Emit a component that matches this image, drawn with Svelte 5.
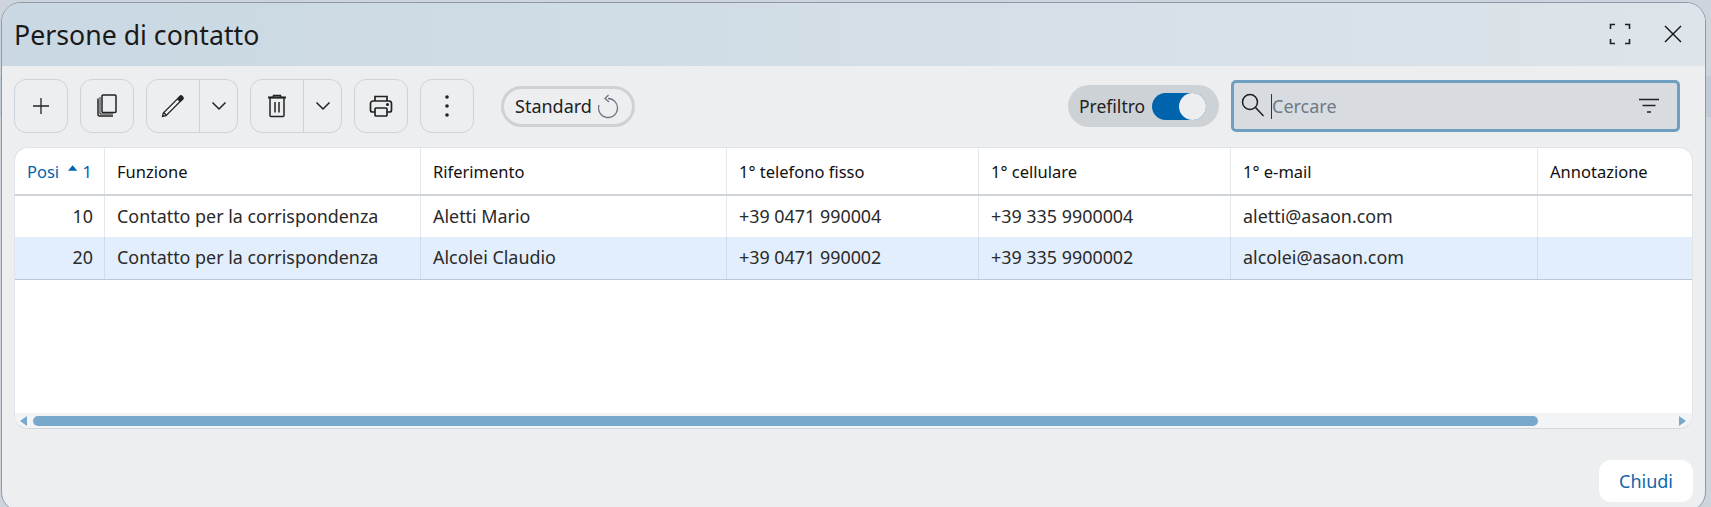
<script>
  const columns = ['Funzione', 'Riferimento', '1° telefono fisso', '1° cellulare', '1° e-mail', 'Annotazione'];

  const rows = [
    { pos: 10, cells: ['Contatto per la corrispondenza', 'Aletti Mario', '+39 0471 990004', '+39 335 9900004', 'aletti@asaon.com', ''] },
    { pos: 20, cells: ['Contatto per la corrispondenza', 'Alcolei Claudio', '+39 0471 990002', '+39 335 9900002', 'alcolei@asaon.com', ''], selected: true }
  ];
</script>

<div class="backdrop">
  <div class="modal">
    <header class="head">
      <h1>Persone di contatto</h1>
      <div class="head-actions">
        <svg width="22" height="22" viewBox="0 0 22 22" fill="none" stroke="#222" stroke-width="1.6">
          <path d="M1.5 6V1.5H6M16 1.5h4.500V6M20.500 16v4.500H16M6 20.500H1.500V16" />
        </svg>
        <svg width="18" height="18" viewBox="0 0 18 18" fill="none" stroke="#111" stroke-width="1.4">
          <path d="M1 1l16 16M17 1L1 17" />
        </svg>
      </div>
    </header>

    <div class="toolbar">
      <button class="tool">
        <svg width="18" height="18" viewBox="0 0 18 18" fill="none" stroke="#222" stroke-width="1.3"><path d="M9 1v16M1 9h16" /></svg>
      </button>
      <button class="tool">
        <svg width="20" height="23" viewBox="0 0 20 23" fill="none" stroke="#222" stroke-width="1.5">
          <rect x="5" y="1" width="14" height="17.500" rx="1" />
          <path d="M1 4.500v16q0 1.500 1.500 1.500H16" />
          <path d="M3 3v17h13" stroke-width="1" />
        </svg>
      </button>
      <div class="split">
        <button class="tool part">
          <svg width="24" height="24" viewBox="0 0 24 24" fill="none" stroke="#222" stroke-width="1.3">
            <path d="M1.500 22.500l.8-3.500L16.500 4.800l2.700 2.700L5 21.700z" />
            <path d="M3 18.800l2.200 2.200" />
            <path d="M17 4.300l2-2q1-1 2 0l.8.800q1 1 0 2l-2 2z" fill="#222" />
          </svg>
        </button>
        <button class="tool caret">
          <svg width="16" height="10" viewBox="0 0 16 10" fill="none" stroke="#222" stroke-width="1.5"><path d="M1.500 1.500L8 8l6.500-6.500" /></svg>
        </button>
      </div>
      <div class="split">
        <button class="tool part">
          <svg width="20" height="24" viewBox="0 0 20 24" fill="none" stroke="#222" stroke-width="1.5">
            <path d="M1 3.500h18" stroke-width="2" />
            <path d="M6.500 3V1.500h7V3" />
            <rect x="3" y="3.500" width="14" height="19" rx="1" />
            <path d="M8 8v10.500M12 8v10.500" />
          </svg>
        </button>
        <button class="tool caret">
          <svg width="16" height="10" viewBox="0 0 16 10" fill="none" stroke="#222" stroke-width="1.5"><path d="M1.500 1.500L8 8l6.500-6.500" /></svg>
        </button>
      </div>
      <button class="tool">
        <svg width="24" height="24" viewBox="0 0 24 24" fill="none" stroke="#222" stroke-width="1.7">
          <path d="M6 7V2.500h12V7" />
          <path d="M6 18H3.500A2 2 0 0 1 1.500 16v-6.500a2.500 2.500 0 0 1 2.500-2.500h16a2.500 2.500 0 0 1 2.500 2.500V16a2 2 0 0 1-2 2H18" />
          <rect x="6" y="14" width="12" height="8" rx="1" />
          <circle cx="18.500" cy="10.500" r="0.700" fill="#222" />
        </svg>
      </button>
      <button class="tool">
        <svg width="6" height="24" viewBox="0 0 6 24" fill="#222">
          <circle cx="3" cy="3" r="1.800" /><circle cx="3" cy="12" r="1.800" /><circle cx="3" cy="21" r="1.800" />
        </svg>
      </button>

      <div class="standard">
        <span>Standard</span>
        <svg width="22" height="25" viewBox="0 0 22 25" fill="none" stroke="#6b7684" stroke-width="1.3">
          <path d="M10 4.500a9.500 9.500 0 1 1-9 6.500" />
          <path d="M10.500 1L7 4.500 11 8" />
        </svg>
      </div>

      <div class="prefilter">
        <span>Prefiltro</span>
        <div class="toggle"><div class="knob"></div></div>
      </div>

      <div class="search">
        <svg width="24" height="24" viewBox="0 0 24 24" fill="none" stroke="#1c1c1c" stroke-width="1.500">
          <circle cx="9" cy="9" r="7.500" />
          <path d="M14.500 14.500l8 8.500" />
        </svg>
        <div class="input"><i class="cursor"></i>Cercare</div>
        <svg class="filter" width="22" height="16" viewBox="0 0 22 16" fill="none" stroke="#222" stroke-width="1.500">
          <path d="M1 1.500h20M4.500 7.500h13M9 14h4" />
        </svg>
      </div>
    </div>

    <div class="table">
      <div class="row header">
        <div class="cell pos-head">
          <span class="clip">Posizione</span>
          <svg width="10" height="6" viewBox="0 0 10 6" fill="#0064a8"><path d="M5 0l5 6H0z" /></svg>
          <span>1</span>
        </div>
        {#each columns as col}
          <div class="cell">{col}</div>
        {/each}
      </div>
      {#each rows as row}
        <div class="row body" class:selected={row.selected}>
          <div class="cell num">{row.pos}</div>
          {#each row.cells as value}
            <div class="cell">{value}</div>
          {/each}
        </div>
      {/each}
      <div class="empty"></div>
      <div class="scrollbar">
        <i class="arrow left"></i>
        <div class="track"><div class="thumb"></div></div>
        <i class="arrow right"></i>
      </div>
    </div>

    <footer class="foot">
      <button class="close">Chiudi</button>
    </footer>
  </div>
</div>

<style>
  :global(body) {
    margin: 0;
    overflow: hidden;
  }

  .backdrop {
    width: 1711px;
    height: 507px;
    box-sizing: border-box;
    padding: 2px 5px 0 1px;
    overflow: hidden;
    font-family: "Noto Sans", "Open Sans", sans-serif;
    color: #222;
    background-color: #cdd4db;
    background-image: linear-gradient(#bfcbd6, #bfcbd6);
    background-size: 100% 41px;
    background-position: 0 76px;
    background-repeat: no-repeat;
  }

  .modal {
    height: 510px;
    box-sizing: border-box;
    display: flex;
    flex-direction: column;
    background: #edeef0;
    border: 1px solid #8d99aa;
    border-radius: 20px;
    overflow: hidden;
  }

  .head {
    height: 63px;
    flex: none;
    display: flex;
    align-items: center;
    justify-content: space-between;
    padding: 0 23px 0 12px;
    background: linear-gradient(90deg, #c9d8e3, #dde4ea);
  }

  h1 {
    margin: 0;
    font-size: 26.7px;
    font-weight: 400;
    color: #1a1a1a;
  }

  .head-actions {
    display: flex;
    align-items: center;
    gap: 33px;
    margin-bottom: 2px;
  }

  .toolbar {
    height: 53px;
    flex: none;
    margin-top: 13px;
    padding: 0 25px 0 12px;
    display: flex;
    align-items: center;
    gap: 12px;
  }

  button {
    font-family: inherit;
    padding: 0;
    cursor: pointer;
  }

  .tool {
    width: 54px;
    height: 54px;
    display: flex;
    align-items: center;
    justify-content: center;
    background: transparent;
    border: 1px solid #ced3da;
    border-radius: 12px;
  }

  .split {
    display: flex;
  }

  .tool.part {
    border-radius: 12px 0 0 12px;
  }

  .tool.caret {
    width: 38px;
    border-left: none;
    border-radius: 0 12px 12px 0;
  }

  .standard {
    margin: 1px 0 0 15px;
    height: 41px;
    box-sizing: border-box;
    width: 134px;
    display: flex;
    align-items: center;
    gap: 6px;
    padding-left: 11px;
    border: 3px solid #cdd2d6;
    border-radius: 21px;
    font-size: 18px;
  }

  .prefilter {
    margin: 1px 0 0 auto;
    width: 151px;
    height: 42px;
    box-sizing: border-box;
    padding-left: 11px;
    display: flex;
    align-items: center;
    gap: 7px;
    background: #cdd2d6;
    border-radius: 21px;
    font-size: 17.5px;
  }

  .toggle {
    width: 54px;
    height: 27px;
    flex: none;
    display: flex;
    justify-content: flex-end;
    background: #0064ad;
    border-radius: 14px;
  }

  .knob {
    width: 27px;
    height: 27px;
    background: #edeef0;
    border-radius: 50%;
  }

  .search {
    margin-top: 1px;
    width: 449px;
    height: 52px;
    box-sizing: border-box;
    display: flex;
    align-items: center;
    padding: 0 17px 0 7px;
    background: #d8dce0;
    border: 3px solid #6f9fc0;
    border-radius: 5px;
  }

  .search > svg:first-child {
    margin-bottom: 2px;
  }

  .input {
    flex: 1;
    display: flex;
    align-items: center;
    margin-left: 6px;
    font-size: 18px;
    color: #6f7a88;
  }

  .cursor {
    width: 1px;
    height: 25px;
    background: #333;
  }

  .table {
    flex: 1;
    min-height: 0;
    margin: 15px 12px 0 12px;
    display: flex;
    flex-direction: column;
    background: #fff;
    border: 1px solid #e0e3e8;
    border-bottom-color: #d3d6dc;
    border-radius: 14px;
    overflow: hidden;
  }

  .row {
    display: grid;
    grid-template-columns: 89px 316px 306px 252px 252px 307px 1fr;
    flex: none;
  }

  .row.header {
    height: 46px;
    border-bottom: 2px solid #d0d4da;
    font-size: 16.5px;
    font-weight: 400;
    color: #111;
  }

  .row.body {
    height: 41px;
    font-size: 17.9px;
    color: #2a2a2a;
  }

  .row.body .cell {
    padding-bottom: 2px;
  }

  .row.body + .row.body {
    height: 43px;
  }

  .row.selected {
    background: #e2eefc;
    border-bottom: 1px solid #b9c7d8;
    box-sizing: border-box;
  }

  .cell {
    display: flex;
    align-items: center;
    padding: 0 12px;
    border-left: 1px solid #e4e7ec;
    white-space: nowrap;
    min-width: 0;
    overflow: hidden;
  }

  .row.selected .cell {
    border-left-color: #d0dce9;
  }

  .cell:first-child {
    border-left: none;
  }

  .cell.num {
    justify-content: flex-end;
    padding-right: 11px;
  }

  .pos-head {
    color: #0064ad;
    gap: 6px;
  }

  .clip {
    width: 36px;
    margin-right: 2px;
    overflow: hidden;
  }

  .pos-head svg {
    margin: 0 -1px 7px 0;
  }

  .empty {
    flex: 1;
  }

  .scrollbar {
    height: 15px;
    flex: none;
    display: flex;
    align-items: center;
    padding: 0 6px 0 5px;
    background: #f3f4f6;
  }

  .track {
    flex: 1;
    padding: 0 141px 0 6px;
  }

  .thumb {
    height: 10px;
    background: #78a8cc;
    border-radius: 5px;
  }

  .arrow {
    width: 0;
    height: 0;
    border-top: 5px solid transparent;
    border-bottom: 5px solid transparent;
  }

  .arrow.left {
    border-right: 7px solid #78a8cc;
  }

  .arrow.right {
    border-left: 7px solid #78a8cc;
  }

  .foot {
    height: 82px;
    flex: none;
    box-sizing: border-box;
    padding: 31px 12px 0 0;
    display: flex;
    justify-content: flex-end;
    align-items: flex-start;
  }

  .close {
    width: 94px;
    height: 42px;
    background: #fff;
    border: none;
    border-radius: 12px;
    font-size: 18px;
    color: #0f67ab;
  }
</style>
